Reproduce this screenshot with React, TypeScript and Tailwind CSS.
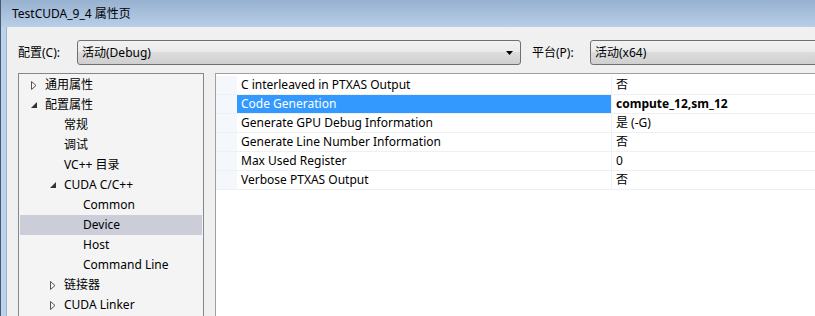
import React from "react";

const FONT = "font-['Noto_Sans','Noto_Sans_CJK_SC',sans-serif]";

type Node = { label: string; level: number; arrow?: "open" | "closed"; selected?: boolean };

const TREE: Node[] = [
  { label: "通用属性", level: 0, arrow: "closed" },
  { label: "配置属性", level: 0, arrow: "open" },
  { label: "常规", level: 1 },
  { label: "调试", level: 1 },
  { label: "VC++ 目录", level: 1 },
  { label: "CUDA C/C++", level: 1, arrow: "open" },
  { label: "Common", level: 2 },
  { label: "Device", level: 2, selected: true },
  { label: "Host", level: 2 },
  { label: "Command Line", level: 2 },
  { label: "链接器", level: 1, arrow: "closed" },
  { label: "CUDA Linker", level: 1, arrow: "closed" },
];

const PROPS = [
  { name: "C interleaved in PTXAS Output", value: "否" },
  { name: "Code Generation", value: "compute_12,sm_12", selected: true },
  { name: "Generate GPU Debug Information", value: "是 (-G)" },
  { name: "Generate Line Number Information", value: "否" },
  { name: "Max Used Register", value: "0" },
  { name: "Verbose PTXAS Output", value: "否" },
];

function Arrow({ kind }: { kind: "open" | "closed" }) {
  if (kind === "closed")
    return (
      <svg width="6" height="9" viewBox="0 0 6 9" className="block">
        <path d="M0.5 0.5 L5 4.5 L0.5 8.5 Z" fill="none" stroke="#555" strokeWidth="1" />
      </svg>
    );
  return (
    <svg width="6" height="6" viewBox="0 0 6 6" className="block">
      <path d="M6 0 L6 6 L0 6 Z" fill="#333" />
    </svg>
  );
}

function Dropdown({ text, className }: { text: string; className: string }) {
  return (
    <div
      className={`h-[25px] rounded-[3px] border border-[#707070] flex items-center pl-[4px] pr-[7px] bg-[linear-gradient(#f2f2f2,#ebebeb_45%,#dcdcdc_50%,#cfcfcf)] ${className}`}
    >
      <span className="flex-1 text-[12px] text-black whitespace-nowrap">{text}</span>
      <svg width="7" height="4" viewBox="0 0 7 4" className="block">
        <path d="M0 0 H7 L3.5 4 Z" fill="#000" />
      </svg>
    </div>
  );
}

export default function App() {
  return (
    <div className={`w-[815px] h-[316px] overflow-hidden flex flex-col bg-[#f0f0f0] border-l border-[#4a5868] ${FONT}`}>
      {/* Title bar */}
      <div className="h-[27px] shrink-0 flex items-center pl-[11px] bg-[linear-gradient(#97b1d0,#b9cfe8)]">
        <span className="text-[12px] text-black">TestCUDA_9_4 属性页</span>
      </div>

      <div className="flex flex-1 min-h-0">
        <div className="w-[6px] shrink-0 bg-[#bcd3ec] border-r border-[#9fb4cc]" />
        <div className="flex-1 min-w-0 flex flex-col">
          {/* Config row */}
          <div className="flex items-center h-[25px] mt-[13px] pl-[11px]">
            <span className="text-[12px] text-black w-[59px] shrink-0 whitespace-nowrap">配置(C):</span>
            <Dropdown text="活动(Debug)" className="w-[444px] shrink-0" />
            <span className="text-[12px] text-black ml-[11px] w-[58px] shrink-0 whitespace-nowrap">平台(P):</span>
            <Dropdown text="活动(x64)" className="w-[260px] shrink-0" />
          </div>

          {/* Panels */}
          <div className="flex mt-[8px] flex-1 min-h-0 pl-[11px]">
            <div className="w-[186px] shrink-0 border border-b-0 border-[#828790] bg-[#f4f4f4] pt-[1px] px-[1px]">
              {TREE.map((n) => (
                <div
                  key={n.label}
                  className={`h-[20px] flex items-center ${n.selected ? "bg-[#cbcdd9]" : ""}`}
                  style={{ paddingLeft: 11 + n.level * 19 }}
                >
                  <span className="w-[14px] flex items-center">{n.arrow && <Arrow kind={n.arrow} />}</span>
                  <span className="text-[12px] text-black whitespace-nowrap">{n.label}</span>
                </div>
              ))}
            </div>

            <div className="ml-[11px] flex-1 border-t border-l border-[#a0a0a0] bg-white pt-[2px]">
              {PROPS.map((p) => (
                <div key={p.name} className="flex h-[19px] border-b border-[#eef0f4]">
                  <div className="w-[21px] shrink-0 bg-[#f4f7fc]" />
                  <div
                    className={`w-[375px] shrink-0 flex items-center pl-[4px] text-[12px] border-r border-[#eef0f4] whitespace-nowrap ${
                      p.selected ? "bg-[#3399ff] text-white" : "text-black"
                    }`}
                  >
                    {p.name}
                  </div>
                  <div className={`flex-1 flex items-center pl-[4px] text-[12px] text-black whitespace-nowrap ${p.selected ? "font-bold" : ""}`}>
                    {p.value}
                  </div>
                </div>
              ))}
            </div>
          </div>
        </div>
      </div>
    </div>
  );
}
